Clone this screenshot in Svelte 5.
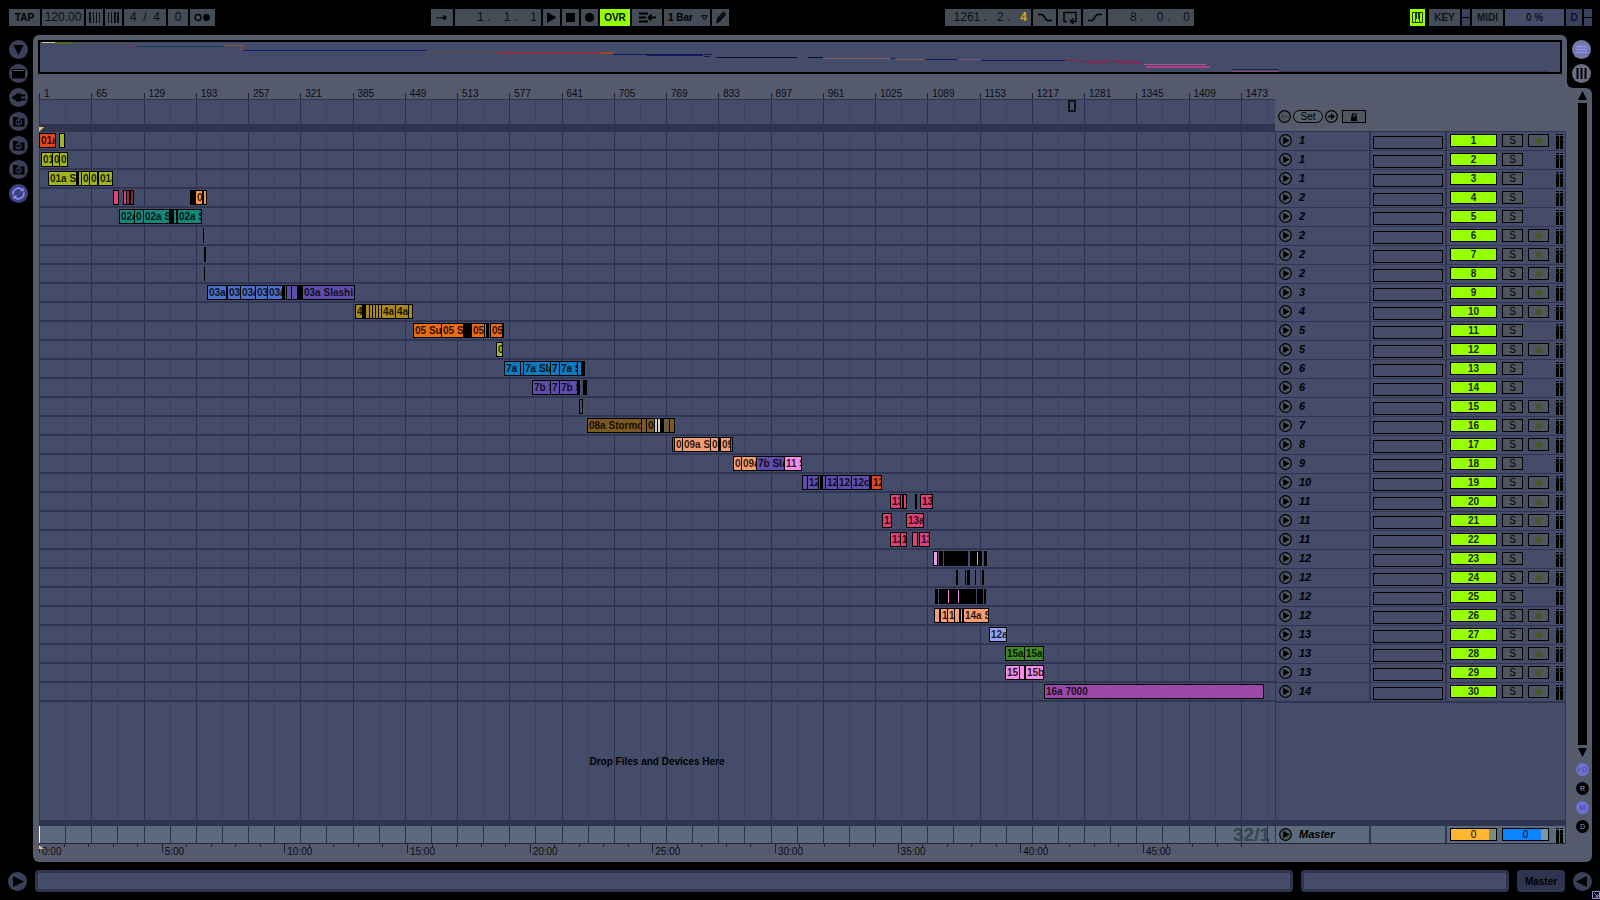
<script lang="ts">
  // [start, end, colour, label] - start and end are positions on the timeline
  type Clip = [number, number, string, string?];

  const SPAN = 1236;

  const red = '#e2451f', lime = '#9fb51b', pink = '#dc4079', orange = '#f3984a';
  const teal = '#14877a', blue = '#4b70c8', purple = '#5f4dab', gold = '#a5881e';
  const tang = '#ea6b13', sky = '#0f7abd', brown = '#7c5921', peach = '#f59c72';
  const rose = '#f28de6', black = '#000';

  const tracks: { group: number; rec: boolean; clips: Clip[] }[] = [
    { group: 1, rec: true, clips: [[0, 17, red, '01a'], [20, 26, lime]] },
    { group: 1, rec: false, clips: [[2, 14, lime, '01'], [13, 21, lime, '0'], [20, 29, lime, '0']] },
    { group: 1, rec: false, clips: [[9, 38, lime, '01a Sl'], [37, 40, black], [39, 43, lime], [42, 51, lime, '0'], [50, 59, lime, '0'], [59, 74, lime, '01a']] },
    { group: 2, rec: false, clips: [[74, 80, '#e8407f'], [84, 88, pink], [87, 91, '#8c2c4e'], [91, 95, '#7a3038'], [151, 157, black], [156, 164, orange, '0'], [163, 165, black], [164, 168, orange]] },
    { group: 2, rec: false, clips: [[80, 96, teal, '02a'], [95, 105, teal, '0'], [104, 131, teal, '02a Sl'], [130, 135, black], [134, 138, teal], [138, 163, teal, '02a Sl']] },
    { group: 2, rec: true, clips: [[164, 165, black]] },
    { group: 2, rec: true, clips: [[165, 167, black]] },
    { group: 2, rec: true, clips: [[165, 166, black]] },
    { group: 3, rec: true, clips: [[168, 188, blue, '03a'], [188, 202, blue, '03a'], [201, 217, blue, '03a'], [216, 229, blue, '03a'], [228, 244, blue, '03a'], [243, 246, black], [245, 248, purple], [247, 253, purple], [252, 259, purple], [258, 264, black], [263, 316, purple, '03a Slashing']] },
    { group: 4, rec: true, clips: [[316, 324, gold, '4a'], [323, 327, black], [326, 331, gold], [330, 334, gold], [333, 337, gold], [336, 340, gold], [339, 343, gold], [342, 357, gold, '4a'], [356, 370, gold, '4a'], [369, 374, gold]] },
    { group: 5, rec: false, clips: [[374, 403, tang, '05 Sur'], [402, 425, tang, '05 Sur'], [424, 433, black], [432, 446, tang, '05'], [445, 448, tang], [447, 450, black], [451, 464, tang, '05'], [463, 465, black]] },
    { group: 5, rec: true, clips: [[457, 464, '#a0bb3c', '0']] },
    { group: 6, rec: false, clips: [[465, 482, sky, '7a'], [481, 485, sky], [484, 512, sky, '7a Sla'], [511, 521, sky, '7'], [520, 539, sky, '7a Sla'], [538, 543, sky], [543, 546, black]] },
    { group: 6, rec: false, clips: [[493, 512, purple, '7b Sla'], [511, 521, purple, '7'], [520, 539, purple, '7b Sla'], [538, 541, black], [544, 548, black]] },
    { group: 6, rec: true, clips: [[540, 544, '#444c6a']] },
    { group: 7, rec: true, clips: [[548, 603, brown, '08a Stormcloud'], [602, 608, brown], [607, 616, brown, '0'], [615, 619, '#d3c7b6'], [618, 622, '#d8d6d2'], [622, 625, black], [624, 631, '#6e5a41'], [630, 636, brown]] },
    { group: 8, rec: true, clips: [[633, 636, '#5b6657'], [635, 644, peach, '0'], [643, 672, peach, '09a Sl'], [671, 680, peach, '0'], [679, 682, black], [681, 692, peach, '09'], [691, 694, '#4c7a74']] },
    { group: 9, rec: false, clips: [[694, 703, peach, '0'], [702, 718, peach, '09a'], [717, 746, purple, '7b Sla'], [745, 763, rose, '11 S']] },
    { group: 10, rec: true, clips: [[763, 769, purple], [768, 780, purple, '12'], [779, 782, purple], [781, 784, black], [783, 787, purple], [786, 799, purple, '12c'], [798, 813, purple, '12c'], [812, 831, purple, '12c'], [831, 833, black], [832, 843, red, '12']] },
    { group: 11, rec: true, clips: [[851, 862, pink, '13'], [861, 864, pink], [863, 865, black], [864, 868, pink], [876, 878, black], [881, 894, pink, '13']] },
    { group: 11, rec: true, clips: [[843, 853, pink, '13'], [867, 885, pink, '13a']] },
    { group: 11, rec: true, clips: [[851, 862, pink, '13'], [861, 868, pink, '1'], [873, 879, pink], [880, 891, pink, '13']] },
    { group: 12, rec: false, clips: [[894, 899, '#eda0dc'], [900, 904, black], [905, 929, black], [931, 943, black], [937, 940, '#d99ad0'], [945, 948, black]] },
    { group: 12, rec: true, clips: [[917, 919, black], [926, 927, black], [928, 931, black], [936, 937, black], [943, 945, black]] },
    { group: 12, rec: false, clips: [[896, 899, black], [900, 937, black], [908, 911, rose], [918, 921, rose], [938, 944, black], [945, 947, black]] },
    { group: 12, rec: true, clips: [[895, 901, peach], [901, 909, peach, '1'], [908, 916, peach, '1'], [915, 921, peach], [921, 924, peach], [924, 950, peach, '14a Sl']] },
    { group: 13, rec: true, clips: [[950, 968, '#90a3ee', '12a']] },
    { group: 13, rec: true, clips: [[966, 986, '#3d8a27', '15a'], [985, 1005, '#3d8a27', '15a']] },
    { group: 13, rec: true, clips: [[966, 981, rose, '15'], [980, 986, rose], [986, 1005, rose, '15b']] },
    { group: 14, rec: true, clips: [[1005, 1225, '#9b49a9', '16a 7000']] }
  ];

  const bars = Array.from({ length: 24 }, (_, i) => 1 + i * 64);
  const cells = Array.from({ length: 48 }, (_, i) => i);
  const minutes = Array.from({ length: 50 }, (_, i) => i);

  // x, width, y, height, colour
  const overview: [number, number, number, number, string][] = [
    [2, 13, 0, 1, '#d6c98a'], [15, 18, 0, 2, '#566a22'], [33, 56, 1, 1, '#4f5446'],
    [88, 8, 3, 1, '#7d3a62'], [96, 88, 4, 1, '#153f5c'], [184, 19, 3, 1, '#8a5a3a'],
    [201, 2, 4, 4, '#8a4a3a'], [203, 184, 8, 1, '#101e68'], [387, 71, 9, 1, '#5a4a44'],
    [458, 114, 10, 2, '#8a2f48'], [560, 14, 10, 2, '#9a4420'], [573, 34, 12, 1, '#0a1a5a'],
    [607, 56, 12, 2, '#101a58'], [664, 8, 12, 1, '#0a1a5a'], [664, 6, 14, 1, '#0a1a5a'],
    [676, 81, 15, 1, '#0a1028'], [768, 15, 15, 1, '#0a1028'], [783, 67, 16, 1, '#8a5f62'],
    [851, 4, 16, 1, '#0a1a5a'], [856, 28, 17, 1, '#8a5f62'], [885, 33, 17, 1, '#101a68'],
    [919, 21, 17, 1, '#80508f'], [941, 84, 18, 1, '#101a58'], [1025, 14, 18, 1, '#8a2348'],
    [1039, 63, 19, 1, '#8e1c4a'], [1048, 20, 21, 1, '#8e1c4a'], [1078, 24, 21, 1, '#8e1c4a'],
    [1104, 62, 22, 1, '#b0508c'], [1106, 64, 24, 2, '#b04080'], [1192, 47, 27, 1, '#1c2b38'],
    [1192, 47, 29, 1, '#8f4a7c'], [1239, 270, 29, 1, '#43305f']
  ];

  const pct = (n: number) => (n / SPAN) * 100 + '%';
</script>

{#snippet playIcon()}
  <svg width="13" height="13" viewBox="0 0 13 13" aria-hidden="true">
    <circle cx="6.5" cy="6.5" r="5.8" fill="#505762" stroke="#000" stroke-width="1.2" />
    <path d="M4.2 2.8 L10.6 6.5 L4.2 10.2 Z" fill="#000" />
  </svg>
{/snippet}

{#snippet meter()}
  <svg class="meter" width="8" height="15" viewBox="0 0 8 15" aria-hidden="true">
    <path d="M0 0h3v1h-3zM4 0h3v1h-3zM0 2h3v13h-3zM4 2h3v13h-3z" fill="#000" />
    <path d="M0 5.500h7" stroke="#1c2033" />
  </svg>
{/snippet}

<div class="app">
  <header class="toolbar">
    <div class="group">
      <button class="btn tap">TAP</button>
      <input class="field tempo" aria-label="Tempo" value="120.00" />
      <button class="btn nudge" aria-label="Nudge down">
        <svg width="13" height="11" viewBox="0 0 13 11"><path d="M1 0h2v11h-2zM5 0h1v11h-1zM8 0h1v11h-1zM11 0h1v11h-1z" fill="#0c0f14" /></svg>
      </button>
      <button class="btn nudge" aria-label="Nudge up">
        <svg width="13" height="11" viewBox="0 0 13 11"><path d="M1 0h1v11h-1zM4 0h1v11h-1zM7 0h2v11h-2zM10 0h2v11h-2z" fill="#0c0f14" /></svg>
      </button>
      <input class="field sig" aria-label="Time signature" value="4  /  4" />
      <input class="field groove" aria-label="Groove amount" value="0" />
      <button class="btn metro" aria-label="Metronome">
        <svg width="17" height="9" viewBox="0 0 17 9"><circle cx="4" cy="4.500" r="3" fill="none" stroke="#000" stroke-width="1.300" /><circle cx="12.500" cy="4.500" r="3.400" fill="#000" /></svg>
      </button>
    </div>

    <div class="group">
      <button class="btn follow" aria-label="Follow">
        <svg width="14" height="9" viewBox="0 0 14 9"><path d="M2 4h1.500v1.500h-1.500zM4.500 4h2v1.500h-2zM7 4h2v1.500h-2zM8.500 1.500L12 4.700L8.500 8z" fill="#000" /></svg>
      </button>
      <input class="field pos" aria-label="Arrangement position" value="1 .    1 .    1" />
      <button class="btn sm" aria-label="Play">
        <svg width="12" height="13" viewBox="0 0 12 13"><path d="M1 1L10.500 6.500L1 12z" fill="#000" /></svg>
      </button>
      <button class="btn sm" aria-label="Stop">
        <svg width="11" height="11" viewBox="0 0 11 11"><rect x="1" y="1" width="9" height="9" fill="#000" /></svg>
      </button>
      <button class="btn sm" aria-label="Record">
        <svg width="11" height="11" viewBox="0 0 11 11"><circle cx="5.500" cy="5.500" r="4.600" fill="#000" /></svg>
      </button>
      <button class="btn ovr">OVR</button>
      <button class="btn back" aria-label="Back to arrangement">
        <svg width="18" height="11" viewBox="0 0 18 11"><path d="M1 1.500h9M1 5.500h7M1 9.500h9M11 5.500h7M13.500 2.500l-3 3l3 3" fill="none" stroke="#000" stroke-width="1.800" /></svg>
      </button>
      <div class="quant">
        <select aria-label="Quantization">
          <option>1 Bar</option>
        </select>
        <svg width="7" height="6" viewBox="0 0 7 6" aria-hidden="true"><path d="M0.700 0.700h5.600L3.500 5z" fill="none" stroke="#000" /></svg>
      </div>
      <button class="btn draw" aria-label="Draw mode">
        <svg width="12" height="13" viewBox="0 0 12 13"><path d="M2 11.500L2.500 7.500L8 1.500Q10.500 1.500 10 4L4.500 10zM2.500 7.500L4.500 10M4 8.500L9 3" fill="none" stroke="#000" stroke-width="1.200" /></svg>
      </button>
    </div>

    <div class="group">
      <div class="field loop">1261 .&nbsp;&nbsp; 2 .&nbsp;&nbsp; <em>4</em></div>
      <button class="btn punch" aria-label="Punch in">
        <svg width="16" height="9" viewBox="0 0 16 9"><path d="M1 1.500h4.500L10 7.500h5" fill="none" stroke="#000" stroke-width="1.500" /></svg>
      </button>
      <button class="btn punch" aria-label="Loop">
        <svg width="16" height="13" viewBox="0 0 16 13"><path d="M5 10.500H2V1.500h12v9h-5M11.500 7.500L8.500 10.300L11.500 13" fill="none" stroke="#000" stroke-width="1.400" /></svg>
      </button>
      <button class="btn punch" aria-label="Punch out">
        <svg width="16" height="9" viewBox="0 0 16 9"><path d="M1 7.500h4.500L10 1.500h5" fill="none" stroke="#000" stroke-width="1.500" /></svg>
      </button>
      <input class="field pos" aria-label="Loop length" value="8 .    0 .    0" />
    </div>

    <div class="group">
      <button class="btn keys" aria-label="Computer keyboard">
        <svg width="11" height="11" viewBox="0 0 11 11"><path d="M0.500 0.500h10v10h-10zM3.500 7v4M7.500 7v4" fill="none" stroke="#213500" /><path d="M3 0h2v7h-2zM6 0h2v7h-2z" fill="#213500" /></svg>
      </button>
      <button class="btn key">KEY</button>
      <div class="leds"><i></i><i></i></div>
      <button class="btn key">MIDI</button>
      <div class="cpu">0 %</div>
      <div class="disk">D</div>
      <div class="leds"><i></i><i></i></div>
    </div>
  </header>

  <div class="body">
    <nav class="side">
      <button aria-label="Hide browser"><svg width="19" height="19" viewBox="0 0 19 19"><path d="M4.500 5h10L9.500 15z" fill="#000" /></svg></button>
      <button aria-label="Live devices"><svg width="19" height="19" viewBox="0 0 19 19"><rect x="3" y="5" width="13" height="9.500" rx="1" fill="#000" /><path d="M4 6.500h11" stroke="#555b78" /></svg></button>
      <button aria-label="Plug-ins"><svg width="19" height="19" viewBox="0 0 19 19"><path d="M2.500 9.500L8 5.500h4v8H8z" fill="#000" /><path d="M12 7.500h4.500M12 11.500h4.500" stroke="#000" stroke-width="2" /></svg></button>
      {#each [1, 2, 3] as n}
        <button aria-label="File browser {n}"><svg width="19" height="19" viewBox="0 0 19 19"><path d="M4 5h4l1 1.500h6.500V14.500H4z" fill="#000" /><circle cx="9.700" cy="10.300" r="2.800" fill="none" stroke="#444a63" /><text x="9.700" y="12.300" font-size="5" text-anchor="middle" fill="#5c6280">{n}</text></svg></button>
      {/each}
      <button class="lit" aria-label="Hot-swap"><svg width="19" height="19" viewBox="0 0 19 19"><path d="M4.200 10.500A5.400 5.400 0 0 1 13 5.500M14.800 8.500A5.400 5.400 0 0 1 6 13.500" fill="none" stroke="#858cf0" stroke-width="1.800" /><path d="M11 7.500L15 7.200L14.500 3.500zM8 11.500L4 11.800L4.500 15.500z" fill="#858cf0" /></svg></button>
    </nav>

    <main class="main">
      <div class="overview">
        <svg viewBox="0 0 1520 30" preserveAspectRatio="none" aria-hidden="true">
          {#each overview as [x, w, y, h, c]}
            <rect {x} {y} width={w} height={h} fill={c} />
          {/each}
        </svg>
      </div>

      <div class="arrange">
        <div class="timeline">
          <div class="ruler">
            {#each bars as bar}
              <span>{bar}</span>
            {/each}
          </div>

          <div class="canvas">
            <div class="grid">
              {#each cells as c}<i class:major={c % 2 === 0}></i>{/each}
            </div>
            <div class="scrub">
              <svg class="cursor" style:left={pct(1029)} width="8" height="12" viewBox="0 0 8 12" aria-hidden="true"><path d="M1 1h6v10H1z" fill="none" stroke="#000" stroke-width="1.400" /><path d="M0 4l2 2l-2 2M8 4l-2 2l2 2" fill="none" stroke="#000" /></svg>
            </div>
            <div class="band">
              <svg class="marker" width="5" height="5" viewBox="0 0 5 5" aria-hidden="true"><path d="M0 0h5L0 5z" fill="#f0c35a" /></svg>
            </div>
            {#each tracks as track}
              <div class="lane">
                {#each track.clips as [start, end, colour, label]}
                  <div class="clip" class:solid={colour === black} style:left={pct(start)} style:width={pct(end - start)} style:background-color={colour}>{label ?? ''}</div>
                {/each}
              </div>
            {/each}
            <div class="drop">Drop Files and Devices Here</div>
          </div>

          <div class="divider"></div>
          <div class="master-lane">
            <div class="grid">
              {#each cells as c}<i class="major"></i>{/each}
            </div>
            <span class="zoom">32/1</span>
          </div>
          <div class="times">
            <svg class="start" width="5" height="5" viewBox="0 0 5 5" aria-hidden="true"><path d="M0 0L5 4H0z" fill="#e8c58a" /></svg>
            {#each minutes as m}
              <span class:major={m % 5 === 0}>{m % 5 === 0 ? m + ':00' : ''}</span>
            {/each}
          </div>
        </div>

        <div class="mixer">
          <div class="locators">
            <button class="round" aria-label="Previous locator"><svg width="13" height="13" viewBox="0 0 13 13"><circle cx="6.500" cy="6.500" r="5.800" fill="#50565f" stroke="#000" stroke-width="1.200" /><path d="M9.500 6.500h-6M6 4L3.500 6.500L6 9" fill="none" stroke="#3a4048" /></svg></button>
            <button class="set">Set</button>
            <button class="round" aria-label="Next locator"><svg width="13" height="13" viewBox="0 0 13 13"><circle cx="6.500" cy="6.500" r="5.800" fill="#59606a" stroke="#000" stroke-width="1.200" /><path d="M3 5.800h3V3.200L10.300 6.500L6 9.800V7.200H3z" fill="#000" /></svg></button>
            <button class="lock" aria-label="Lock envelopes"><svg width="8" height="8" viewBox="0 0 8 8"><path d="M1 3.500h6V8H1z" fill="#000" /><path d="M2.500 4V1h3.500v2.500" fill="none" stroke="#000" stroke-width="1.200" /></svg></button>
          </div>
          {#each tracks as track, i}
            <div class="strip">
              <div class="name">{@render playIcon()}<span>{track.group}</span></div>
              <div class="slot"><div></div></div>
              <div class="controls">
                <button class="on">{i + 1}</button>
                <button class="solo">S</button>
                {#if track.rec}
                  <button class="arm" aria-label="Arm track {i + 1}"><svg width="8" height="8" viewBox="0 0 8 8"><circle cx="4" cy="4" r="3.500" fill="#44552f" /></svg></button>
                {/if}
                {@render meter()}
              </div>
            </div>
          {/each}
          <div class="rest"></div>
          <div class="divider"></div>
          <div class="strip master">
            <div class="name">{@render playIcon()}<span>Master</span></div>
            <div class="slot"></div>
            <div class="controls">
              <input class="val vol" aria-label="Master volume" value="0" />
              <input class="val cue" aria-label="Cue volume" value="0" />
              {@render meter()}
            </div>
          </div>
          <div class="foot"></div>
        </div>
      </div>
    </main>

    <aside class="rail">
      <div class="views">
        <div>
          <button class="view lit" aria-label="Arrangement view"><svg width="19" height="19" viewBox="0 0 19 19"><path d="M4 6.500h11M4 9.500h11M4 12.500h11" stroke="#8b91ff" stroke-width="1.600" /></svg></button>
          <button class="view" aria-label="Session view"><svg width="19" height="19" viewBox="0 0 19 19"><path d="M5.500 4v11M9.500 4v11M13.500 4v11" stroke="#000" stroke-width="2" /></svg></button>
        </div>
      </div>
      <div class="scroll">
        <svg width="9" height="9" viewBox="0 0 9 9" aria-hidden="true"><path d="M4.500 0L9 9H0z" fill="#000" /></svg>
        <div class="track"></div>
        <svg width="9" height="9" viewBox="0 0 9 9" aria-hidden="true"><path d="M4.500 9L9 0H0z" fill="#000" /></svg>
        <button class="dot lit">I·O</button>
        <button class="dot">R</button>
        <button class="dot lit">M</button>
        <button class="dot">D</button>
      </div>
    </aside>
  </div>

  <footer class="status">
    <button class="circle" aria-label="Show info"><svg width="19" height="19" viewBox="0 0 19 19"><path d="M5 4L16 9.500L5 15z" fill="#000" /></svg></button>
    <div class="bar wide"></div>
    <div class="bar"></div>
    <button class="sel">Master</button>
    <button class="circle" aria-label="Show detail"><svg width="19" height="19" viewBox="0 0 19 19"><path d="M14 4L3 9.500L14 15z" fill="#000" /></svg></button>
    <svg class="grip" width="8" height="8" viewBox="0 0 8 8" aria-hidden="true"><path d="M0.500 0.500h7v7h-7z" fill="none" stroke="#8d93e8" /><path d="M2 2l4 4M6 3v3h-3" fill="none" stroke="#8d93e8" /></svg>
  </footer>
</div>

<style>
  :global(body) {
    background: #000;
  }
  .app {
    --panel: #555a6d;
    --lane: #444c6a;
    --line: #2f3552;
    --ctl: #444c56;
    display: flex;
    flex-direction: column;
    min-height: 100vh;
    background: #000;
    color: #000;
    font-family: 'Liberation Sans', Arial, sans-serif;
    font-size: 10px;
  }
  .app *,
  .app *::before {
    box-sizing: border-box;
  }
  button,
  input,
  select {
    margin: 0;
    padding: 0;
    border: 0;
    border-radius: 0;
    color: inherit;
    font: inherit;
    appearance: none;
  }
  svg {
    display: block;
    flex: none;
  }

  /* toolbar */
  .toolbar {
    display: flex;
    justify-content: space-between;
    height: 35px;
    padding: 9px 8px 9px 9px;
  }
  .group {
    display: flex;
    gap: 2px;
  }
  .btn {
    display: flex;
    align-items: center;
    justify-content: center;
    height: 17px;
    background: var(--ctl);
    font-weight: bold;
  }
  .field {
    height: 17px;
    background: var(--ctl);
    color: #0c1016;
    font-size: 12px;
    line-height: 17px;
    text-align: center;
    white-space: pre;
  }
  .tap { width: 31px; }
  .tempo { width: 42px; }
  .nudge { width: 17px; }
  .sig { width: 42px; }
  .groove { width: 20px; }
  .metro { width: 25px; }
  .follow { width: 22px; }
  .pos {
    width: 86px;
    padding-right: 4px;
    text-align: right;
  }
  .sm { width: 17px; }
  .ovr {
    width: 30px;
    background: #96ff00;
  }
  .back { width: 30px; }
  .quant {
    display: flex;
    align-items: center;
    width: 46px;
    height: 17px;
    padding: 0 2px 0 4px;
    background: var(--ctl);
  }
  .quant select {
    flex: 1;
    min-width: 0;
    background: none;
    font-weight: bold;
  }
  .draw { width: 17px; }
  .loop {
    width: 86px;
    padding-right: 4px;
    text-align: right;
  }
  .loop em {
    color: #d9a520;
    font-style: normal;
    font-weight: bold;
  }
  .punch { width: 23px; }
  .keys {
    width: 15px;
    margin-right: 2px;
    background: #96ff00;
  }
  .key {
    width: 31px;
    color: #10141c;
  }
  .leds {
    display: flex;
    flex-direction: column;
    gap: 1px;
    width: 8px;
  }
  .leds i {
    flex: 1;
    background: #3a415d;
  }
  .cpu,
  .disk {
    width: 59px;
    background: var(--lane);
    color: #10141c;
    font-weight: bold;
    line-height: 17px;
    text-align: center;
  }
  .disk {
    width: 16px;
    background: #3a415d;
  }

  /* left buttons */
  .body {
    display: flex;
    flex: 1;
    padding-right: 8px;
  }
  .side {
    display: flex;
    flex-direction: column;
    align-items: center;
    gap: 5px;
    width: 33px;
    padding: 5px 0 0 4px;
  }
  .side button,
  .view,
  .circle {
    width: 19px;
    height: 19px;
    border-radius: 50%;
    background: #3b405a;
  }
  .side .lit {
    background: #3d4380;
  }

  .main {
    display: flex;
    flex: 1;
    flex-direction: column;
    min-width: 0;
    background: var(--panel);
    border-radius: 6px 6px 0 6px;
  }
  .overview {
    height: 34px;
    margin: 5px 5px 0;
    border: 2px solid #000;
    background: var(--lane);
  }
  .overview svg {
    width: 100%;
    height: 30px;
  }
  .arrange {
    display: grid;
    flex: 1;
    grid-template-columns: minmax(0, 1fr) 291px;
    margin: 0 1px 0 6px;
  }
  .timeline,
  .mixer {
    display: flex;
    flex-direction: column;
    min-width: 0;
  }

  .ruler {
    display: flex;
    height: 25px;
    padding-top: 14px;
    overflow: hidden;
  }
  .ruler span {
    position: relative;
    flex: 0 0 4.228%;
    padding-left: 5px;
    line-height: 11px;
    color: #0a0c16;
  }
  .ruler span::before {
    content: '';
    position: absolute;
    top: 5px;
    bottom: 0;
    left: 0;
    border-left: 1px solid #1d2236;
  }
  .canvas {
    position: relative;
    display: flex;
    flex: 1;
    flex-direction: column;
    background: var(--lane);
  }
  .grid {
    position: absolute;
    inset: 0;
    display: flex;
    overflow: hidden;
  }
  .grid i {
    flex: 0 0 2.114%;
    border-left: 1px solid #3c4361;
  }
  .grid i.major {
    border-color: #2b3150;
  }
  .scrub {
    position: relative;
    height: 25px;
    border-top: 1px solid #2b3150;
  }
  .cursor {
    position: absolute;
    top: 0;
  }
  .band {
    position: relative;
    height: 8px;
    background: #30354f;
  }
  .marker {
    position: absolute;
    top: 3px;
    left: 0;
  }
  .lane {
    position: relative;
    height: 19px;
    border-bottom: 2px solid var(--line);
  }
  .clip {
    position: absolute;
    top: 1px;
    height: 15px;
    padding-left: 1px;
    overflow: hidden;
    border: 1px solid #000;
    color: rgba(0, 0, 0, 0.85);
    font-size: 10px;
    font-weight: bold;
    line-height: 13px;
    white-space: nowrap;
  }
  .solid {
    padding: 0;
    border-width: 0;
  }
  .drop {
    position: relative;
    display: flex;
    flex: 1;
    align-items: center;
    justify-content: center;
    min-height: 60px;
    font-weight: bold;
  }
  .divider {
    height: 6px;
    background: #30354f;
  }
  .master-lane {
    position: relative;
    display: flex;
    align-items: center;
    justify-content: flex-end;
    height: 18px;
    padding-right: 5px;
    border-bottom: 1px solid #22283c;
    background: #5b6a7c;
  }
  .master-lane .grid i:first-child {
    border-left: 1px solid #fff;
  }
  .zoom {
    color: #39434f;
    font-size: 19px;
    font-weight: bold;
    line-height: 17px;
  }
  .times {
    position: relative;
    display: flex;
    height: 18px;
    overflow: hidden;
  }
  .start {
    position: absolute;
    top: 1px;
    left: 0;
  }
  .times span {
    flex: 0 0 1.985%;
    width: 0;
    height: 3px;
    border-left: 1px solid #1d2236;
    color: #0a0c16;
    line-height: 15px;
    white-space: nowrap;
  }
  .times .major {
    height: 9px;
    padding-left: 2px;
  }

  /* mixer */
  .locators {
    display: flex;
    align-items: flex-end;
    gap: 2px;
    height: 57px;
    padding: 0 3px 8px;
  }
  .round {
    width: 13px;
    height: 13px;
    background: none;
  }
  .set {
    width: 30px;
    height: 13px;
    border: 1px solid #000;
    border-radius: 7px;
    background: #59606a;
    line-height: 11px;
  }
  .lock,
  .solo,
  .arm {
    display: flex;
    align-items: center;
    justify-content: center;
    height: 13px;
    border: 1px solid #000;
    background: #50565f;
  }
  .lock {
    width: 24px;
    margin-left: 2px;
  }
  .strip {
    display: grid;
    grid-template-columns: 95px 76px 1fr;
    height: 19px;
    background: var(--lane);
    border-top: 1px solid var(--line);
    border-left: 1px solid var(--line);
    border-right: 1px solid var(--line);
  }
  .strip > div {
    display: flex;
    align-items: flex-start;
  }
  .name {
    gap: 7px;
    padding: 2px 0 0 3px;
    border-right: 2px solid var(--line);
    font-size: 11px;
    font-style: italic;
    font-weight: bold;
    line-height: 13px;
  }
  .slot {
    padding: 4px 2px 0 2px;
    border-right: 2px solid var(--line);
  }
  .slot div {
    flex: 1;
    height: 13px;
    border: 1px solid #000;
  }
  .controls {
    gap: 5px;
    padding: 2px 1px 0 3px;
  }
  .on {
    width: 47px;
    height: 13px;
    border: 1px solid #000;
    background: #96ff00;
    color: #172400;
    font-weight: bold;
    line-height: 11px;
  }
  .solo,
  .arm {
    width: 21px;
  }
  .meter {
    margin-left: auto;
  }
  .rest {
    flex: 1;
    border: solid var(--line);
    border-width: 2px 1px 0;
    background: var(--lane);
  }
  .master {
    height: 18px;
    border-top: 0;
    border-bottom: 1px solid #22283c;
    background: #5b6a7c;
  }
  .val {
    width: 47px;
    height: 13px;
    border: 1px solid #000;
    text-align: center;
  }
  .vol {
    background: linear-gradient(to right, #ffb633 84%, #7c8d7b 84%);
  }
  .cue {
    background: linear-gradient(to right, #0a84ff 84%, #7f96a8 84%);
  }
  .foot {
    height: 18px;
  }

  /* right rail */
  .rail {
    display: flex;
    flex-direction: column;
    width: 25px;
  }
  .views {
    height: 53px;
    background: var(--panel);
  }
  .views div {
    display: flex;
    flex-direction: column;
    gap: 5px;
    height: 53px;
    padding: 5px 0 0 5px;
    border-bottom-left-radius: 6px;
    background: #000;
  }
  .view {
    background: #6b7085;
  }
  .view.lit {
    background: #747aa6;
  }
  .scroll {
    display: flex;
    flex: 1;
    flex-direction: column;
    align-items: center;
    padding: 3px 0 29px 6px;
    border-radius: 0 6px 6px 0;
    background: var(--panel);
  }
  .track {
    flex: 1;
    width: 9px;
    margin: 3px 0;
    background: #000;
  }
  .dot {
    width: 13px;
    height: 13px;
    margin-top: 6px;
    border-radius: 50%;
    background: #000;
    color: #9aa0b5;
    font-size: 7px;
    line-height: 13px;
  }
  .dot.lit {
    background: #6c72d0;
    color: #3c429a;
  }

  /* bottom */
  .status {
    position: relative;
    display: flex;
    align-items: center;
    gap: 8px;
    height: 38px;
    padding: 0 8px;
  }
  .bar {
    flex: 0 0 208px;
    height: 22px;
    border: 3px solid #30354f;
    border-radius: 4px;
    background: var(--lane);
  }
  .wide {
    flex: 1 1 0;
  }
  .sel {
    width: 48px;
    height: 22px;
    border-radius: 4px;
    background: #30354f;
    font-weight: bold;
  }
  .grip {
    position: absolute;
    right: 0;
    bottom: 1px;
  }
</style>
